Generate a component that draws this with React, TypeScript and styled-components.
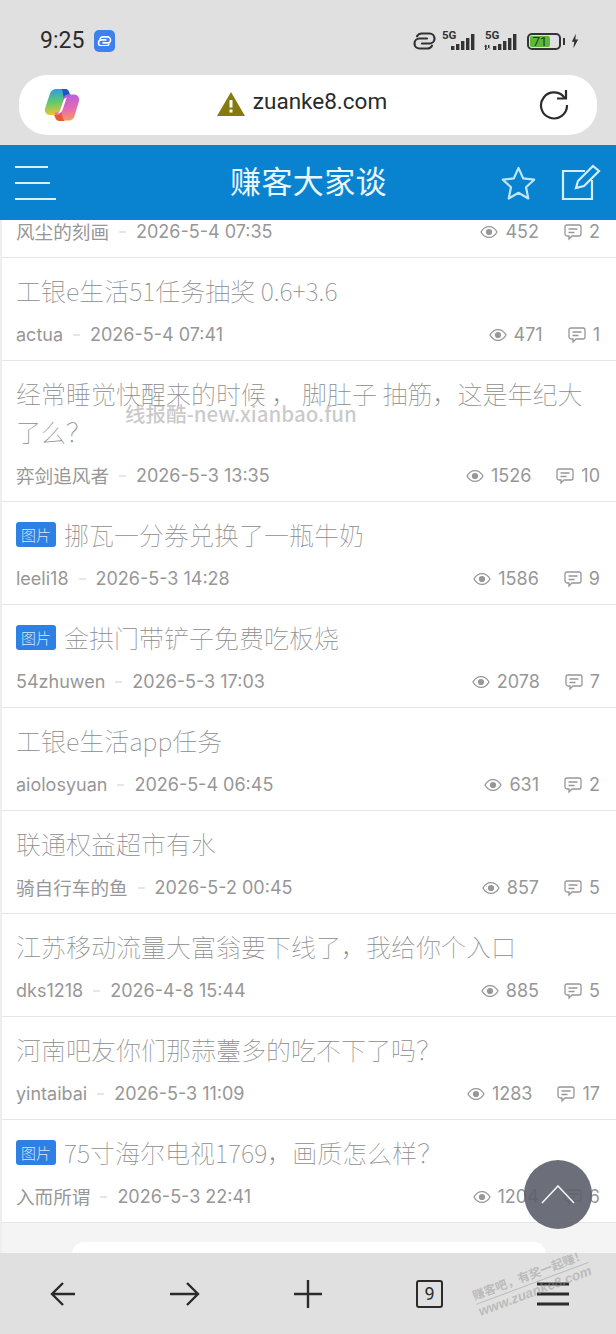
import React from 'react';
import styled, { createGlobalStyle } from 'styled-components';

const GlobalStyle = createGlobalStyle`
    html, body { margin: 0; padding: 0; background: #fff; }
    * { box-sizing: border-box; }
    body { font-family: Roboto, "Noto Sans CJK SC", sans-serif; }
`;

const Screen = styled.div`
    position: relative;
    width: 616px;
    height: 1334px;
    overflow: hidden;
    display: flex;
    flex-direction: column;
    background: #fff;
`;

const BrowserTop = styled.div`
    height: 145px;
    background: #e0e0e0;
    padding: 0 19px;
    display: flex;
    flex-direction: column;
    flex-shrink: 0;
`;

const StatusBar = styled.div`
    height: 75px;
    display: flex;
    align-items: center;
    justify-content: space-between;
    padding: 7px 18px 0 21px;
    color: #2b2b2b;
`;

const StatusLeft = styled.div`
    display: flex;
    align-items: center;
    gap: 10px;
`;

const Clock = styled.span`
    font-size: 23px;
    line-height: 30px;
`;

const LinkBadge = styled.span`
    width: 21px;
    height: 22px;
    border-radius: 5px;
    background: #3e80ee;
    display: flex;
    align-items: center;
    justify-content: center;
`;

const StatusRight = styled.div`
    display: flex;
    align-items: center;
`;

const Signal = styled.div<{ $left: number }>`
    position: relative;
    width: 34px;
    height: 18px;
    margin-left: ${p => p.$left}px;
    display: flex;
    align-items: flex-end;
`;

const SignalLabel = styled.span<{ $left: number }>`
    position: absolute;
    left: ${p => p.$left}px;
    top: -2px;
    font-size: 11.5px;
    font-weight: 700;
    line-height: 10px;
    color: #333;
`;

const Battery = styled.div`
    position: relative;
    width: 34px;
    height: 17px;
    margin-left: 9px;
    border: 2px solid #333;
    border-radius: 5px;
    padding: 1px;
    &::after {
        content: '';
        position: absolute;
        right: -6px;
        top: 3px;
        width: 2px;
        height: 7px;
        background: #333;
    }
`;

const BatteryFill = styled.div`
    width: 71%;
    height: 100%;
    background: #5db83a;
    border-radius: 2px;
    font-size: 13px;
    line-height: 11px;
    color: #24401a;
    text-align: center;
`;

const UrlBar = styled.div`
    height: 60px;
    background: #fff;
    border-radius: 28px;
    display: flex;
    align-items: center;
    justify-content: space-between;
    padding: 0 28px 0 25px;
`;

const UrlCenter = styled.div`
    display: flex;
    align-items: center;
    gap: 8px;
    margin-right: 15px;
    margin-bottom: 3px;
`;

const UrlText = styled.span`
    font-size: 22.5px;
    color: #2a2a2a;
    margin-bottom: 5px;
`;

const Header = styled.header`
    height: 75px;
    background: #0983d0;
    display: grid;
    grid-template-columns: 1fr auto 1fr;
    align-items: center;
    padding: 0 14px 0 15px;
    flex-shrink: 0;
`;

const HeaderTitle = styled.h1`
    margin: 0 0 5px;
    font-family: "Noto Sans CJK SC", sans-serif;
    font-size: 31px;
    line-height: 44px;
    font-weight: 400;
    letter-spacing: 0.4px;
    color: #e9f6ff;
`;

const HeaderActions = styled.div`
    display: flex;
    align-items: center;
    justify-content: flex-end;
    gap: 25px;
`;

const List = styled.main`
    flex: 1;
    overflow: hidden;
    border-left: 2px solid #eee;
`;

const Row = styled.article`
    padding: 13px 16px 12px 14px;
    border-bottom: 1px solid #e6e6e6;
`;

const CutRow = styled.article`
    height: 38px;
    overflow: hidden;
    padding: 0 16px 0 14px;
    border-bottom: 1px solid #e6e6e6;
    & > div {
        margin-top: -1px;
    }
`;

const TitleLine = styled.div`
    font-family: "Noto Sans CJK SC", sans-serif;
    font-weight: 100;
    font-size: 25px;
    line-height: 38px;
    color: #8c8c8c;
    margin-bottom: 13px;
    display: flex;
    align-items: flex-start;
    gap: 8px;
`;

const TitleText = styled.span`
    display: block;
    flex: 1;
`;

const Tag = styled.span`
    width: 40px;
    height: 25px;
    margin-top: 7px;
    background: #2f80e4;
    border-radius: 3px;
    color: #d6e7fc;
    font-size: 15px;
    line-height: 25px;
    text-align: center;
    font-weight: 300;
    flex-shrink: 0;
`;

const Meta = styled.div`
    display: flex;
    align-items: center;
    justify-content: space-between;
    font-family: Inter, "Noto Sans CJK SC", sans-serif;
    font-size: 18px;
    font-weight: 400;
    line-height: 26px;
    color: #979797;
`;

const MetaLeft = styled.div`
    display: flex;
    align-items: center;
`;

const UserName = styled.span<{ $cjk: boolean }>`
    font-size: ${p => (p.$cjk ? '18.6px' : '18px')};
`;

const Dash = styled.span`
    width: 7px;
    height: 2px;
    background: #e6e6e6;
    margin: 0 10px;
`;

const MetaRight = styled.div`
    display: flex;
    align-items: center;
    gap: 25px;
`;

const Stat = styled.span`
    display: flex;
    align-items: center;
    gap: 7px;
`;

const FooterGap = styled.div`
    height: 31px;
    background: #f4f4f4;
    padding: 19px 70px 0;
`;

const FooterCard = styled.div`
    height: 12px;
    background: #fff;
    border-radius: 24px 24px 0 0;
`;

const BottomNav = styled.nav`
    height: 81px;
    background: #e0e0e0;
    display: flex;
    align-items: center;
    justify-content: space-between;
    padding: 0 47px 0 50px;
    flex-shrink: 0;
`;

const TabCount = styled.span`
    width: 27px;
    height: 28px;
    border: 2px solid #2b2b2b;
    border-radius: 3px;
    font-size: 18px;
    line-height: 24px;
    text-align: center;
    color: #2b2b2b;
`;

const ScrollTop = styled.button`
    position: absolute;
    left: 524px;
    top: 1160px;
    width: 68px;
    height: 69px;
    border: 0;
    border-radius: 50%;
    background: rgba(92, 94, 106, 0.9);
    display: flex;
    align-items: center;
    justify-content: center;
    padding: 0;
`;

const Watermark = styled.div`
    position: absolute;
    left: 125px;
    top: 401px;
    font-family: "Noto Sans CJK SC", sans-serif;
    font-size: 20.5px;
    line-height: 24px;
    font-weight: 500;
    color: rgba(150, 150, 150, 0.5);
    white-space: nowrap;
`;

const Stamp = styled.div`
    position: absolute;
    left: 470px;
    top: 1288px;
    transform: rotate(-20.5deg);
    transform-origin: left top;
    color: rgba(150, 150, 150, 0.5);
    font-family: "Noto Sans CJK SC", sans-serif;
    font-weight: 700;
    font-size: 12px;
    line-height: 16px;
    white-space: nowrap;
`;

const StampSite = styled.div`
    border-top: 1px solid rgba(150, 150, 150, 0.5);
    font-family: "Liberation Sans", sans-serif;
    font-size: 13.5px;
    font-style: italic;
    margin-top: 1px;
`;

const rows = [
    { user: 'actua', date: '2026-5-4 07:41', views: '471', replies: '1', title: '工银e生活51任务抽奖 0.6+3.6' },
    { user: '弈剑追风者', date: '2026-5-3 13:35', views: '1526', replies: '10', title: '经常睡觉快醒来的时候 ， 脚肚子 抽筋，这是年纪大了么？' },
    { user: 'leeli18', date: '2026-5-3 14:28', views: '1586', replies: '9', title: '挪瓦一分券兑换了一瓶牛奶', tag: true },
    { user: '54zhuwen', date: '2026-5-3 17:03', views: '2078', replies: '7', title: '金拱门带铲子免费吃板烧', tag: true },
    { user: 'aiolosyuan', date: '2026-5-4 06:45', views: '631', replies: '2', title: '工银e生活app任务' },
    { user: '骑自行车的鱼', date: '2026-5-2 00:45', views: '857', replies: '5', title: '联通权益超市有水' },
    { user: 'dks1218', date: '2026-4-8 15:44', views: '885', replies: '5', title: '江苏移动流量大富翁要下线了，我给你个入口' },
    { user: 'yintaibai', date: '2026-5-3 11:09', views: '1283', replies: '17', title: '河南吧友你们那蒜薹多的吃不下了吗？' },
    { user: '入而所谓', date: '2026-5-3 22:41', views: '1204', replies: '6', title: '75寸海尔电视1769，画质怎么样？', tag: true },
];

const EyeIcon = () => (
    <svg width="18" height="14" viewBox="0 0 18 14" fill="none">
        <path d="M1 7c2-3.600 4.700-5.400 8-5.400s6 1.800 8 5.400c-2 3.600-4.700 5.400-8 5.400S3 10.600 1 7z" stroke="#979797" strokeWidth="1.300" />
        <circle cx="9" cy="7" r="3.100" fill="#979797" />
    </svg>
);

const ChatIcon = () => (
    <svg width="18" height="17" viewBox="0 0 18 17" fill="none" stroke="#979797" strokeWidth="1.300">
        <path d="M3 1h12a2 2 0 0 1 2 2v7a2 2 0 0 1-2 2H8l-3 3v-3H3a2 2 0 0 1-2-2V3a2 2 0 0 1 2-2z" />
        <path d="M4.500 5h9M4.500 8.500h6" />
    </svg>
);

const MetaLine = ({ user, date, views, replies }: { user: string; date: string; views: string; replies: string }) => (
    <Meta>
        <MetaLeft>
            <UserName $cjk={/[\u4e00-\u9fa5]/.test(user)}>{user}</UserName>
            <Dash />
            {date}
        </MetaLeft>
        <MetaRight>
            <Stat><EyeIcon />{views}</Stat>
            <Stat><ChatIcon />{replies}</Stat>
        </MetaRight>
    </Meta>
);

const SignalBars = ({ split }: { split?: boolean }) => (
    <svg width="34" height="16" viewBox="0 0 34 16" fill="#333">
        {split && <path d="M1 11h1.500v5H1zM0 12.500l1.700-2 1.700 2zM4 11h1.500v5H4zM3 14l1.700 2 1.700-2z" />}
        <rect x="9" y="12" width="3.400" height="4" />
        <rect x="14" y="10" width="3.400" height="6" />
        <rect x="19" y="7" width="3.400" height="9" />
        <rect x="24" y="4" width="3.400" height="12" />
        <rect x="29" y="0" width="3.400" height="16" />
    </svg>
);

const ChainIcon = ({ size, color, weight }: { size: number; color: string; weight: number }) => (
    <svg width={size} height={size * 0.72} viewBox="0 0 25 18" fill="none" stroke={color} strokeWidth={weight} strokeLinecap="round">
        <path d="M15 6.500H7.500a5 5 0 0 0 0 10H15a5.500 5.500 0 0 0 5-2.800" />
        <path d="M10 11.500h7.500a5 5 0 0 0 0-10H10a5.500 5.500 0 0 0-5 2.800" />
    </svg>
);

const CopilotLogo = () => (
    <svg width="36" height="34" viewBox="0 0 36 34">
        <defs>
            <linearGradient id="cpA" x1="0.3" y1="0" x2="0.4" y2="1">
                <stop offset="0" stopColor="#2d9be8" />
                <stop offset="0.5" stopColor="#5fc96d" />
                <stop offset="1" stopColor="#f4c431" />
            </linearGradient>
            <linearGradient id="cpB" x1="0.4" y1="0" x2="0.6" y2="1">
                <stop offset="0" stopColor="#b65ce0" />
                <stop offset="0.6" stopColor="#e86cb0" />
                <stop offset="1" stopColor="#f79a5a" />
            </linearGradient>
        </defs>
        <path d="M12 1h9c2 0 3.500 1 4 3l1.500 5H24c-1.500 0-2.700 1-3.200 2.500L17 24c-.5 1.800-2 3-4 3H6c-3.500 0-6-3-5-6.500l5-15C7 2.500 9.500 1 12 1z" fill="url(#cpA)" />
        <path d="M17 1h4c2 0 3.500 1 4 3l1.500 5H24c-1.500 0-2.700 1-3.200 2.500l-.5 1.500-1.500-8C18.500 2 18 1 17 1z" fill="#1f57c0" />
        <path d="M24 6.500h6c3.500 0 6 3 5 6.500l-4.500 15c-.8 2.800-3 4.500-5.500 4.500h-9c-2 0-3.500-1-4-3l-1.500-5H13c1.500 0 2.700-1 3.200-2.500L20 9.500c.5-1.800 2-3 4-3z" fill="url(#cpB)" />
        <path d="M10 27h3c2 0 3.500-1 4-3l.2-.5 1.500 6c.3 1.500 1.300 3 2.300 3.500h-5.500c-2 0-3.500-1-4-3z" fill="#e8583a" />
        <path d="M23 9.500c-2 .3-3.200 1.500-3.800 3.500l-3 9c-.5 1.500-1.400 2.700-2.700 3.500 2.700 0 4.200-1.200 5-3.500l3-9c.5-1.700 1-3 1.500-3.500z" fill="#fff" />
    </svg>
);

export default function App() {
    return (
        <Screen>
            <GlobalStyle />
            <BrowserTop>
                <StatusBar>
                    <StatusLeft>
                        <Clock>9:25</Clock>
                        <LinkBadge><ChainIcon size={15} color="#fff" weight={2.600} /></LinkBadge>
                    </StatusLeft>
                    <StatusRight>
                        <ChainIcon size={25} color="#333" weight={2.200} />
                        <Signal $left={5}><SignalLabel $left={0}>5G</SignalLabel><SignalBars /></Signal>
                        <Signal $left={8}><SignalLabel $left={1}>5G</SignalLabel><SignalBars split /></Signal>
                        <Battery><BatteryFill>71</BatteryFill></Battery>
                        <svg width="8" height="16" viewBox="0 0 10 18" fill="#333" style={{ marginLeft: 10 }}>
                            <path d="M6 0L1 10h3l-1 8 6-11H5.500z" />
                        </svg>
                    </StatusRight>
                </StatusBar>
                <UrlBar>
                    <CopilotLogo />
                    <UrlCenter>
                        <svg width="28" height="24" viewBox="0 0 28 24">
                            <path d="M14 0L28 24H0z" fill="#857a0c" />
                            <rect x="12.500" y="8" width="3" height="7.500" fill="#fff" />
                            <rect x="12.500" y="17.500" width="3" height="3" fill="#fff" />
                        </svg>
                        <UrlText>zuanke8.com</UrlText>
                    </UrlCenter>
                    <svg width="30" height="30" viewBox="0 0 30 30" fill="none" stroke="#2b2b2b" strokeWidth="2.200">
                        <path d="M26 8.500A13 13 0 1 0 28 15" />
                        <path d="M18 8.500h9V0" />
                    </svg>
                </UrlBar>
            </BrowserTop>
            <Header>
                <svg width="42" height="34" viewBox="0 0 42 34" stroke="#d9f0ff" strokeWidth="2">
                    <path d="M0 1h33M0 17h35M0 33h41" />
                </svg>
                <HeaderTitle>赚客大家谈</HeaderTitle>
                <HeaderActions>
                    <svg width="35" height="34" viewBox="0 0 35 34" fill="none" stroke="#bfe6ff" strokeWidth="2.200" strokeLinejoin="round">
                        <path d="M17.500 2l4.700 10.400 11 1.300-8.200 7.600 2.300 11.200-9.800-5.700-9.800 5.700L10 21.300 1.800 13.700l11-1.300z" />
                    </svg>
                    <svg width="41" height="37" viewBox="0 0 41 37" fill="none" stroke="#d4eeff" strokeWidth="2.200">
                        <path d="M24 7H2v28h29V16" />
                        <path d="M15 24l2-7L32 2l6 5-15 15z" />
                    </svg>
                </HeaderActions>
            </Header>
            <List>
                <CutRow>
                    <MetaLine user="风尘的刻画" date="2026-5-4 07:35" views="452" replies="2" />
                </CutRow>
                {rows.map(r => (
                    <Row key={r.user}>
                        <TitleLine>
                            {r.tag && <Tag>图片</Tag>}
                            <TitleText>{r.title}</TitleText>
                        </TitleLine>
                        <MetaLine user={r.user} date={r.date} views={r.views} replies={r.replies} />
                    </Row>
                ))}
                <FooterGap><FooterCard /></FooterGap>
            </List>
            <BottomNav>
                <svg width="26" height="26" viewBox="0 0 26 26" fill="none" stroke="#2b2b2b" strokeWidth="2.400"><path d="M25 13H2M13 2L2 13l11 11" /></svg>
                <svg width="30" height="26" viewBox="0 0 30 26" fill="none" stroke="#2b2b2b" strokeWidth="2.400"><path d="M0 13h28M17 2l11 11-11 11" /></svg>
                <svg width="28" height="28" viewBox="0 0 28 28" fill="none" stroke="#2b2b2b" strokeWidth="2.400"><path d="M14 0v28M0 14h28" /></svg>
                <TabCount>9</TabCount>
                <svg width="32" height="24" viewBox="0 0 32 24" fill="none" stroke="#2b2b2b" strokeWidth="2.800"><path d="M0 2h32M0 12h32M0 22h32" /></svg>
            </BottomNav>
            <Watermark>线报酷-new.xianbao.fun</Watermark>
            <Stamp>
                赚客吧，有奖一起赚！
                <StampSite>www.zuanke8.com</StampSite>
            </Stamp>
            <ScrollTop>
                <svg width="34" height="19" viewBox="0 0 34 19" fill="none" stroke="#f2f2f2" strokeWidth="1.600"><path d="M1 18L17 1l16 17" /></svg>
            </ScrollTop>
        </Screen>
    );
}
